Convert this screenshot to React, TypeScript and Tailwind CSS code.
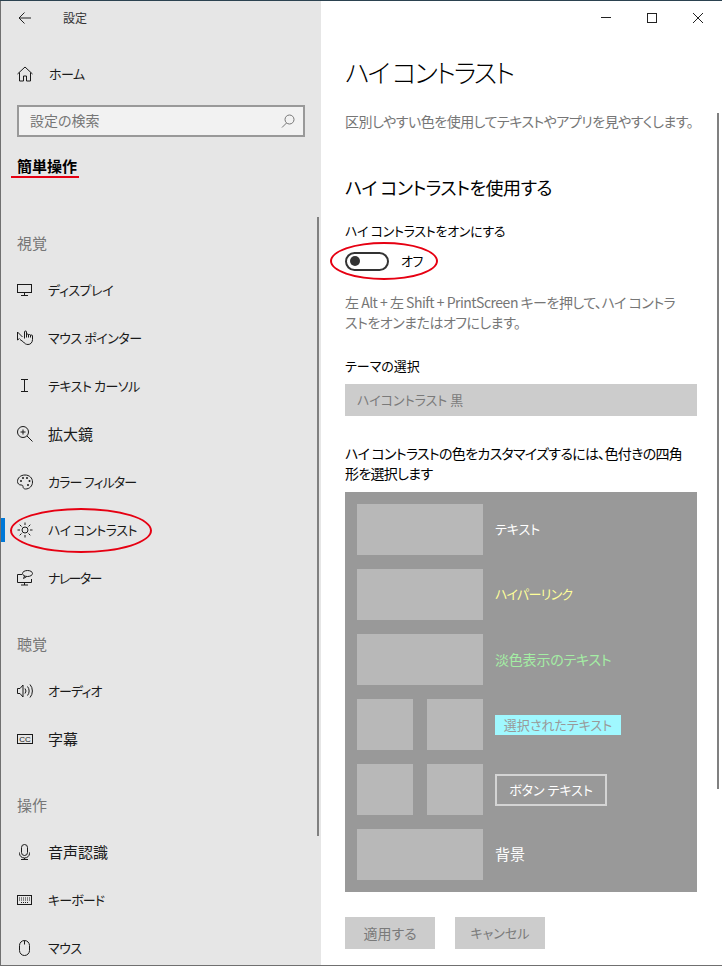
import type { ReactNode } from 'react';

const FONT = "[font-family:'Noto_Sans_CJK_JP','Noto_Sans',sans-serif] [font-feature-settings:'palt']";

function Icon({ children }: { children: ReactNode }) {
  return (
    <svg
      width="16"
      height="16"
      viewBox="0 0 16 16"
      fill="none"
      stroke="currentColor"
      strokeWidth="1"
      className="flex-shrink-0"
    >
      {children}
    </svg>
  );
}

const icons = {
  display: (
    <Icon>
      <rect x="0.5" y="2.5" width="14" height="8" />
      <path d="M7.5 10.5v3M4 13.5h7" />
    </Icon>
  ),
  pointer: (
    <Icon>
      <path d="M.5 2v8l2-1.500M.5 2l5 5" />
      <path d="M7.500 8.500V2a1 1 0 0 1 2 0v5.500m0-2.500a1 1 0 0 1 2 0v2.500m0-2a1 1 0 0 1 2 0v2m0-1.500a1 1 0 0 1 2 0v3.500c0 3-2 5-4.500 5-2 0-3.500-1-4.500-2.500L3 9.500" />
    </Icon>
  ),
  cursor: (
    <Icon>
      <path d="M4 1.500h7M7.500 1.500v12M4 13.500h7" />
    </Icon>
  ),
  zoom: (
    <Icon>
      <circle cx="6" cy="6" r="5.500" />
      <path d="M3.500 6h5M6 3.500v5M10 10l5.500 5.500" />
    </Icon>
  ),
  palette: (
    <Icon>
      <path d="M8 1C3.500 1 .5 4 .5 7.500c0 2 1.500 3.500 3.500 3.500 1.500 0 2 .5 2 1.500 0 1.500 1 2.500 2.500 2.500 4 0 7-3 7-7 0-4-3-7-7.500-7z" />
      <circle cx="4" cy="7" r="1" fill="currentColor" stroke="none" />
      <circle cx="6" cy="4" r="1" fill="currentColor" stroke="none" />
      <circle cx="10" cy="4" r="1" fill="currentColor" stroke="none" />
      <circle cx="12.500" cy="7" r="1" fill="currentColor" stroke="none" />
      <circle cx="11" cy="11" r="1" fill="currentColor" stroke="none" />
    </Icon>
  ),
  sun: (
    <Icon>
      <circle cx="8" cy="8" r="3" />
      <path d="M8 .5v2.500M8 13v2.500M.5 8H3M13 8h2.500M2.700 2.700l1.800 1.800M11.500 11.500l1.800 1.800M2.700 13.300l1.800-1.800M11.500 4.500l1.800-1.800" />
    </Icon>
  ),
  narrator: (
    <Icon>
      <path d="M5 4.500H.5v8h14V9M7.500 12.500v2.500M4 15h7" />
      <ellipse cx="10.500" cy="3.500" rx="5" ry="3" />
      <path d="M7.500 6l-1 2.500 3-1.800" />
    </Icon>
  ),
  audio: (
    <Icon>
      <path d="M.5 5.500h2.500l3-3.500v12l-3-3.500H.5z" />
      <path d="M8 5.500a4 4 0 0 1 0 5M10.500 3.500a7 7 0 0 1 0 9M13 1.500a10 10 0 0 1 0 13" />
    </Icon>
  ),
  caption: (
    <Icon>
      <rect x="0.5" y="3.500" width="15" height="9" />
      <text x="8" y="10.500" textAnchor="middle" fontSize="8" fill="currentColor" stroke="none" fontFamily="Liberation Sans">
        CC
      </text>
    </Icon>
  ),
  mic: (
    <Icon>
      <rect x="4.500" y="0.500" width="6" height="11" rx="3" />
      <path d="M2.500 8.500v1a5 4.500 0 0 0 10 0v-1M7.500 14v1.500M4 15.500h7" />
    </Icon>
  ),
  keyboard: (
    <Icon>
      <rect x="0.500" y="3.500" width="14" height="9" />
      <path d="M2 6h11M2 8h11M4 10.500h7" strokeDasharray="1 1" />
    </Icon>
  ),
  mouse: (
    <Icon>
      <rect x="2.500" y="0.500" width="10" height="15" rx="5" />
      <path d="M7.500 .5v4" />
    </Icon>
  ),
};

const KANA = 'text-[13px] tracking-[-0.45px]';
const KANJI = 'text-[15px]';

function NavRow({
  icon,
  label,
  active,
  textClass = KANA,
}: {
  icon: ReactNode;
  label: string;
  active?: boolean;
  textClass?: string;
}) {
  return (
    <div className="relative h-12 flex items-center pl-4 text-[#1a1a1a]">
      {active && <div className="absolute left-0 top-3 w-1 h-6 bg-[#0078d7]" />}
      {active && (
        <div className="absolute left-[9px] top-[2px] w-[142px] h-[45px] rounded-[50%] border-2 border-[#e60012]" />
      )}
      <span className="w-[31px] flex-shrink-0">{icon}</span>
      <span className={`relative ${textClass}`}>{label}</span>
    </div>
  );
}

function GroupLabel({ label, className }: { label: string; className: string }) {
  return <div className={`h-5 leading-5 pl-4 text-[15px] text-[#767676] ${className}`}>{label}</div>;
}

function Sidebar() {
  return (
    <aside className="relative w-[320px] flex-shrink-0 bg-[#e6e6e6] overflow-hidden">
      <div className="h-[33px] flex items-center pl-[17px] text-xs text-[#333]">
        <svg width="14" height="14" viewBox="0 0 14 14" fill="none" stroke="#222" strokeWidth="1" className="flex-shrink-0">
          <path d="M13 7H1.500M6.500 1.500L1 7l5.500 5.500" />
        </svg>
        <span className="ml-[31px]">設定</span>
      </div>
      <div className="mt-4 h-12 flex items-center pl-4 text-[#1a1a1a]">
        <span className="w-[32px] flex-shrink-0">
          <Icon>
            <path d="M.5 8L8 1l7.500 7M2.500 6.500v8.500h4v-5h3v5h4V6.500" />
          </Icon>
        </span>
        <span className="text-[13px] tracking-[-0.5px]">ホーム</span>
      </div>
      <div className="mt-[7px] ml-4 w-[288px] h-8 border-2 border-[#999999] bg-[#f2f2f2] flex items-center justify-between pl-[11px] pr-2 text-sm text-[#767676]">
        <span className="mb-[3px]">設定の検索</span>
        <svg width="14" height="14" viewBox="0 0 14 14" fill="none" stroke="#767676" strokeWidth="1" className="flex-shrink-0">
          <circle cx="8.500" cy="5.500" r="4.500" />
          <path d="M5.500 9L1 13.500" />
        </svg>
      </div>
      <div className="mt-[19px] ml-4 h-5 leading-5 text-[15px] font-bold text-black relative w-fit">
        簡単操作
        <div className="absolute -left-[6px] top-5 w-[68px] h-0.5 bg-[#e60012]" />
      </div>

      <GroupLabel label="視覚" className="mt-[57px]" />
      <div className="mt-[13px]">
        <NavRow icon={icons.display} label="ディスプレイ" />
        <NavRow icon={icons.pointer} label="マウス ポインター" />
        <NavRow icon={icons.cursor} label="テキスト カーソル" />
        <NavRow icon={icons.zoom} label="拡大鏡" textClass={KANJI} />
        <NavRow icon={icons.palette} label="カラー フィルター" textClass="text-[13px] tracking-[-0.85px]" />
        <NavRow icon={icons.sun} label="ハイ コントラスト" active />
        <NavRow icon={icons.narrator} label="ナレーター" textClass="text-[13px] tracking-[-1.6px]" />
      </div>

      <GroupLabel label="聴覚" className="mt-8" />
      <div className="mt-[13px]">
        <NavRow icon={icons.audio} label="オーディオ" textClass="text-[13px] tracking-[-0.9px]" />
        <NavRow icon={icons.caption} label="字幕" textClass={KANJI} />
      </div>

      <GroupLabel label="操作" className="mt-8" />
      <div className="mt-[13px]">
        <NavRow icon={icons.mic} label="音声認識" textClass={KANJI} />
        <NavRow icon={icons.keyboard} label="キーボード" textClass="text-[13px] tracking-[-0.9px]" />
        <NavRow icon={icons.mouse} label="マウス" textClass="text-[13px] tracking-[-0.5px]" />
      </div>

      {/* scrollbar thumb */}
      <div className="absolute left-[316px] top-[216px] w-0.5 h-[619px] bg-[#808080]" />
    </aside>
  );
}

function WindowControls() {
  return (
    <div className="h-[33px] flex items-center justify-end text-[#222]">
      <svg width="46" height="12" viewBox="0 0 46 12" fill="none" stroke="currentColor" strokeWidth="1">
        <path d="M18 5.500h10" />
      </svg>
      <svg width="46" height="12" viewBox="0 0 46 12" fill="none" stroke="currentColor" strokeWidth="1">
        <rect x="18.500" y="1.500" width="9" height="9" />
      </svg>
      <svg width="46" height="12" viewBox="0 0 46 12" fill="none" stroke="currentColor" strokeWidth="1" className="mr-px">
        <path d="M18 1l10 10M28 1L18 11" />
      </svg>
    </div>
  );
}

function ColorRow({ split, children }: { split?: boolean; children: ReactNode }) {
  return (
    <div className="h-[51px] flex items-center">
      <div className="w-[126px] h-full flex gap-[14px] flex-shrink-0">
        <div className="flex-1 bg-[#b8b8b8]" />
        {split && <div className="flex-1 bg-[#b8b8b8]" />}
      </div>
      <div className="ml-3">{children}</div>
    </div>
  );
}

function Content() {
  return (
    <main className="relative flex-1 bg-white overflow-hidden">
      <WindowControls />
      <div className="pl-6 pr-[25px]">
        <h1 className="mt-[18px] h-10 leading-10 text-[26px] font-light tracking-[-2px] text-black">ハイ コントラスト</h1>
        <p className="mt-[19px] h-5 leading-5 text-sm tracking-[-0.5px] text-[#767676] whitespace-nowrap">
          区別しやすい色を使用してテキストやアプリを見やすくします。
        </p>
        <h2 className="mt-[41px] h-[30px] leading-[30px] text-lg tracking-[-0.5px] text-black">ハイ コントラストを使用する</h2>
        <div className="mt-[19px] h-5 leading-5 text-[13px] tracking-[-0.3px] text-black">ハイ コントラストをオンにする</div>
        <div className="relative mt-[10px] h-5 flex items-center text-black">
          <div className="w-11 h-[19px] rounded-full border-2 border-[#333] flex items-center pl-[3px]">
            <div className="w-2.5 h-2.5 rounded-full bg-[#333]" />
          </div>
          <span className="ml-3 text-[13px] tracking-[-0.5px]">オフ</span>
          <div className="absolute -left-[15px] -top-[9px] w-[108px] h-[38px] rounded-[50%] border-2 border-[#e60012]" />
        </div>
        <div className="mt-[21px] text-sm tracking-[-0.5px] leading-5 text-[#767676] whitespace-nowrap">
          <div>左 Alt + 左 Shift + PrintScreen キーを押して、ハイ コントラ</div>
          <div>ストをオンまたはオフにします。</div>
        </div>
        <div className="mt-[24px] h-5 leading-5 text-[13px] text-black">テーマの選択</div>
        <div className="mt-2 h-8 bg-[#cccccc] flex items-center pl-3 text-[13px] text-[#7a7a7a]">ハイコントラスト 黒</div>
        <div className="mt-[27px] text-sm tracking-[-0.7px] leading-5 text-black whitespace-nowrap">
          <div>ハイ コントラストの色をカスタマイズするには、色付きの四角</div>
          <div>形を選択します</div>
        </div>
        <div className="mt-[9px] h-[400px] bg-[#999999] p-3 flex flex-col gap-[14px]">
          <ColorRow>
            <div className="mb-px text-white text-[13px]">テキスト</div>
          </ColorRow>
          <ColorRow>
            <div className="mb-px text-[#ffff99] text-[13px] tracking-[-0.7px]">ハイパーリンク</div>
          </ColorRow>
          <ColorRow>
            <div className="mb-px text-[#a4eea4] text-sm tracking-[-0.2px]">淡色表示のテキスト</div>
          </ColorRow>
          <ColorRow split>
            <div className="w-[126px] h-5 leading-5 bg-[#a0f8ff] text-[#999999] text-[13px] text-center">選択されたテキスト</div>
          </ColorRow>
          <ColorRow split>
            <div className="w-28 h-8 border-2 border-[#d4d4d4] text-white text-[13px] flex items-center justify-center">ボタン テキスト</div>
          </ColorRow>
          <ColorRow>
            <div className="text-white text-[15px]">背景</div>
          </ColorRow>
        </div>
        <div className="mt-[25px] flex gap-5">
          <div className="w-[90px] h-8 bg-[#cccccc] flex items-center justify-center text-sm text-[#7a7a7a]">適用する</div>
          <div className="w-[90px] h-8 bg-[#cccccc] flex items-center justify-center text-[13px] text-[#7a7a7a]">キャンセル</div>
        </div>
      </div>
      {/* scrollbar thumb */}
      <div className="absolute left-[396px] top-[112px] w-0.5 h-[676px] bg-[#808080]" />
    </main>
  );
}

export default function App() {
  return (
    <div className={`w-[722px] h-[966px] overflow-hidden flex flex-col bg-white ${FONT}`}>
      <div className="h-px bg-[#2b4250] flex-shrink-0" />
      <div className="flex-1 min-h-0 flex border-l border-[#707070]">
        <Sidebar />
        <Content />
      </div>
      <div className="h-px bg-[#707070] flex-shrink-0" />
    </div>
  );
}
